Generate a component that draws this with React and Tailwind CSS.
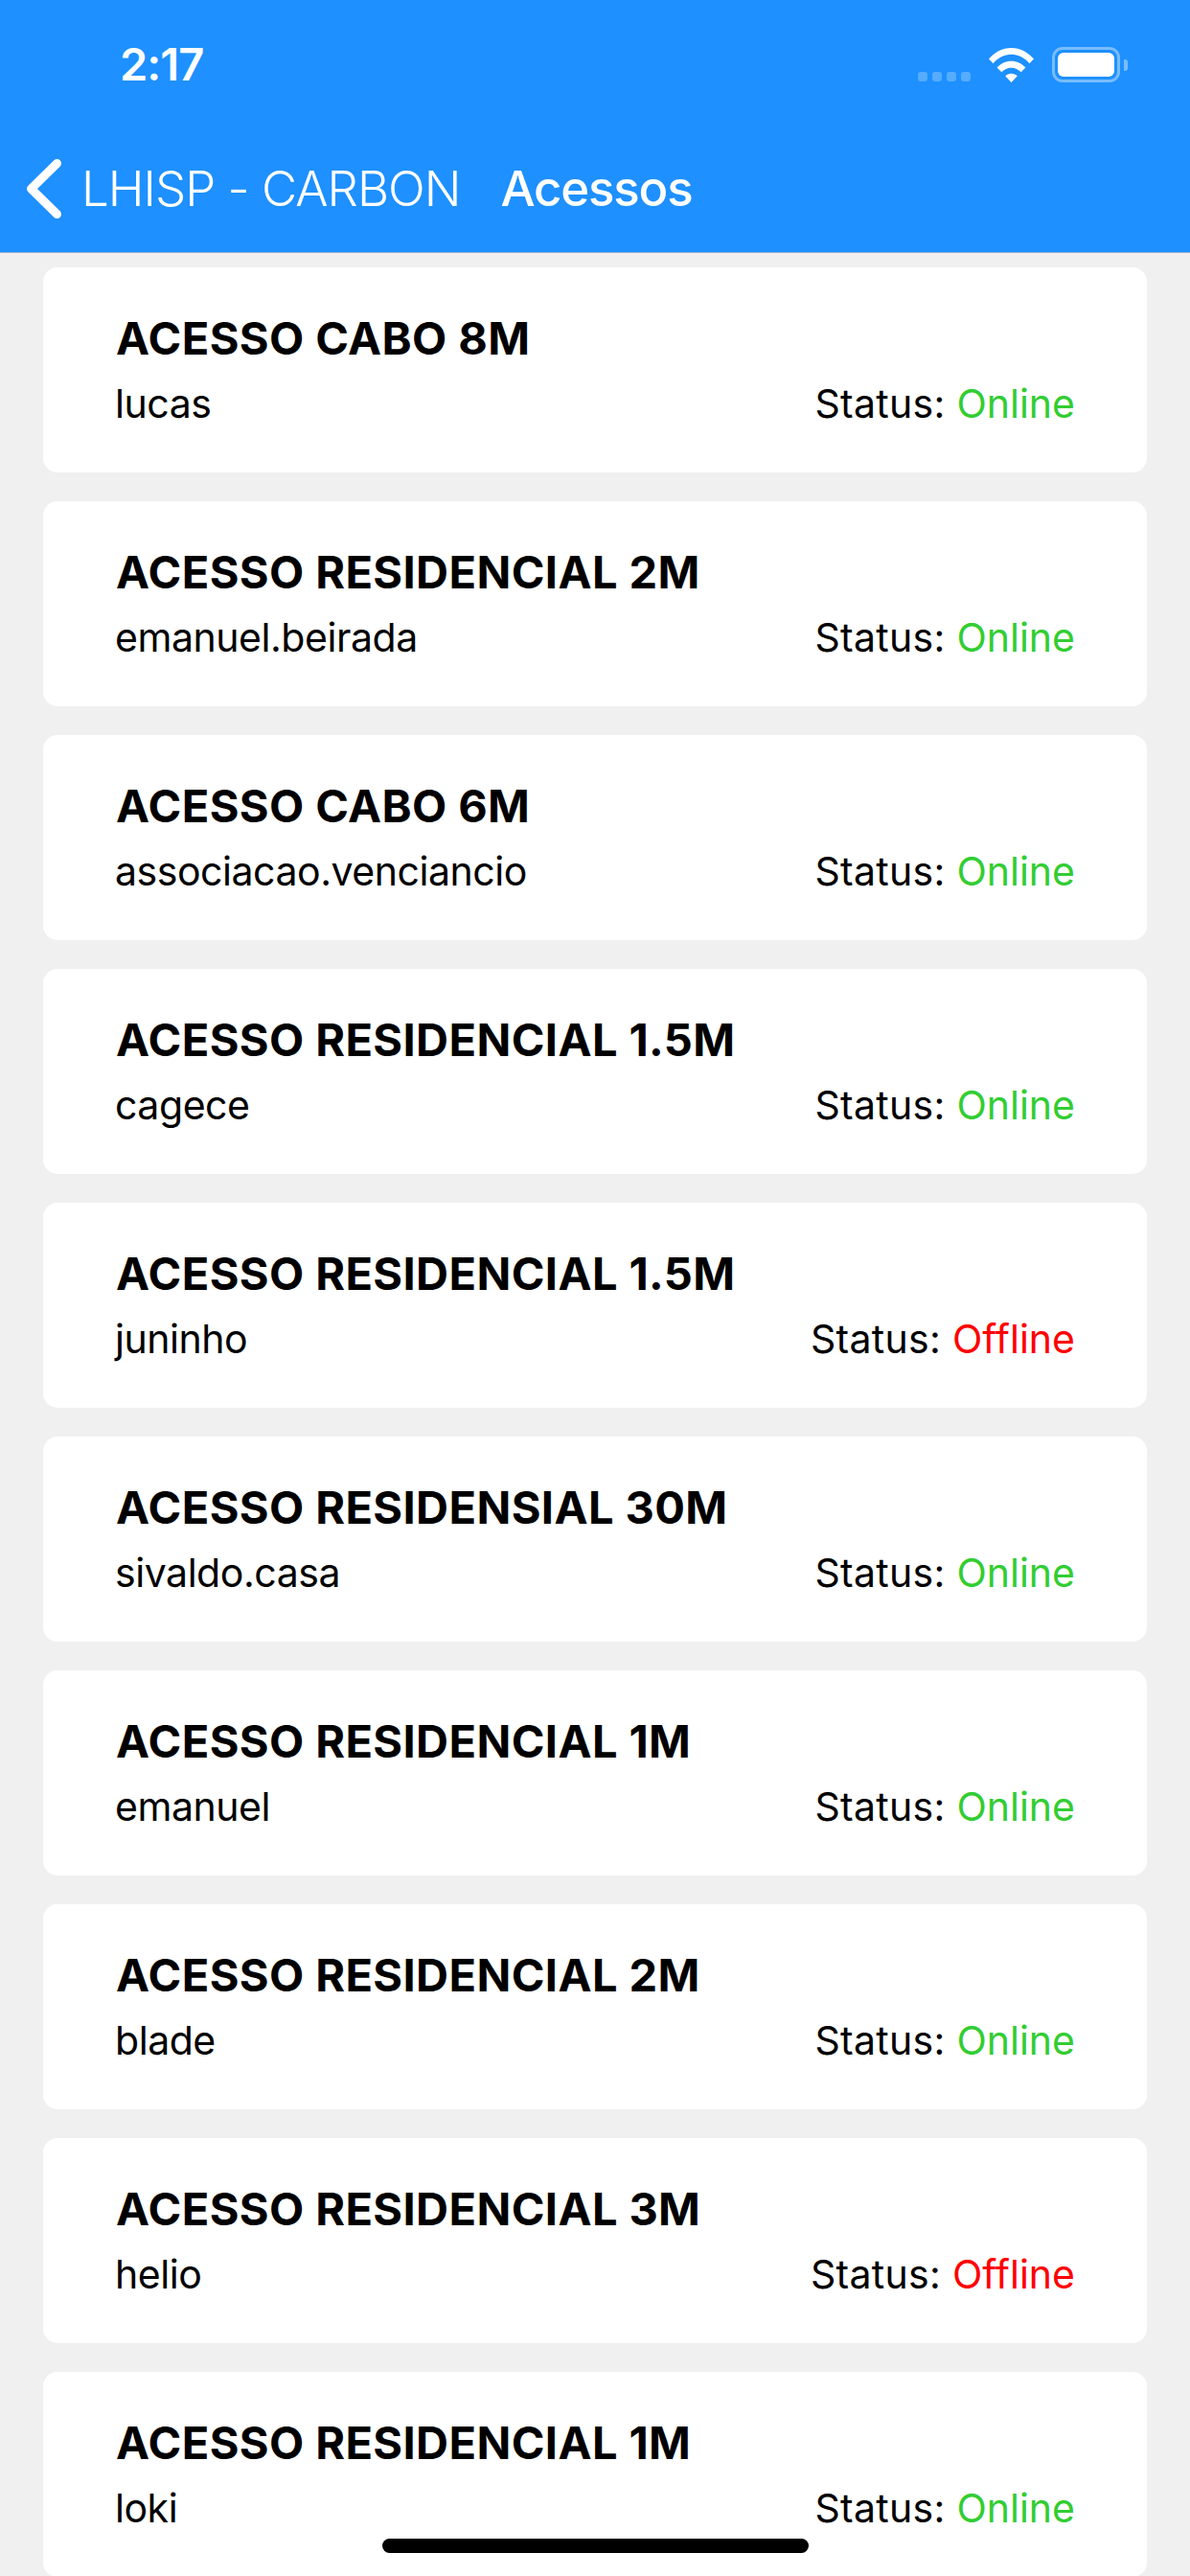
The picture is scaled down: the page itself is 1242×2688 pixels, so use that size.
const acessos = [
  { plano: 'ACESSO CABO 8M', login: 'lucas', online: true },
  { plano: 'ACESSO RESIDENCIAL 2M', login: 'emanuel.beirada', online: true },
  { plano: 'ACESSO CABO 6M', login: 'associacao.venciancio', online: true },
  { plano: 'ACESSO RESIDENCIAL 1.5M', login: 'cagece', online: true },
  { plano: 'ACESSO RESIDENCIAL 1.5M', login: 'juninho', online: false },
  { plano: 'ACESSO RESIDENSIAL 30M', login: 'sivaldo.casa', online: true },
  { plano: 'ACESSO RESIDENCIAL 1M', login: 'emanuel', online: true },
  { plano: 'ACESSO RESIDENCIAL 2M', login: 'blade', online: true },
  { plano: 'ACESSO RESIDENCIAL 3M', login: 'helio', online: false },
  { plano: 'ACESSO RESIDENCIAL 1M', login: 'loki', online: true },
];

function StatusBar() {
  return (
    <div className="flex h-[134px] items-start justify-between pl-[125px] pr-[65px] pt-[42px]">
      <span className="text-[47px] font-semibold leading-[50px] tracking-[-1px]">2:17</span>
      <div className="flex items-end pt-[7px]">
        <div className="mr-[19px] flex gap-[5px] pb-[1px]">
          {[0, 1, 2, 3].map((i) => (
            <div key={i} className="h-[10px] w-[10px] rounded-[3px] bg-white/25" />
          ))}
        </div>
        <svg className="mr-[19px] h-[36px] w-[47px]" viewBox="0 0 47 36" fill="white">
          <path d="M0 11.5C6.2 4.4 14.4 0 23.5 0S40.8 4.4 47 11.5l-4.6 4.7C37.5 10.4 30.9 6.8 23.5 6.8S9.500 10.4 4.600 16.2z" />
          <path d="M8.6 20.5c3.9-4.1 9.2-6.7 14.9-6.7s11 2.6 14.9 6.7l-4.7 4.8c-2.7-2.7-6.3-4.5-10.2-4.5s-7.5 1.8-10.2 4.5z" />
          <path d="M17.2 29.3c1.7-1.5 3.9-2.5 6.3-2.5s4.6 1 6.3 2.500L23.5 36z" />
        </svg>
        <div className="h-[37px] w-[71px] rounded-[11px] border-[3px] border-white/40 p-[3px]">
          <div className="h-full w-full rounded-[6px] bg-white" />
        </div>
        <div className="mb-[12px] ml-[4px] h-[12px] w-[4px] rounded-r-[3px] bg-white/40" />
      </div>
    </div>
  );
}

function NavBar() {
  return (
    <div className="flex h-[129px] items-start pl-[28px] pt-[32px]">
      <svg className="h-[62px] w-[36px]" viewBox="0 0 36 62" fill="none" stroke="white" strokeWidth="9" strokeLinecap="round" strokeLinejoin="round">
        <path d="M31.500 4.500 4.500 31 31.500 57.500" />
      </svg>
      <span className="ml-[21px] text-[51px] font-light leading-[62px] tracking-[-1px]">LHISP - CARBON</span>
      <span className="ml-[42px] text-[51px] font-medium leading-[62px] tracking-[-1.2px]">Acessos</span>
    </div>
  );
}

function AcessoCard({ plano, login, online }) {
  return (
    <div className="rounded-[15px] bg-white pb-[42px] pl-[76px] pr-[75px] pt-[45px]">
      <div className="text-[47px] font-bold leading-[58px] tracking-[0.4px] text-black">{plano}</div>
      <div className="mt-[9px] flex items-center justify-between text-[41px] leading-[60px] text-black">
        <span className="-ml-[1px] tracking-[-0.45px]">{login}</span>
        <span>
          <span className="tracking-[0.3px]">Status: </span>
          <span className={online ? 'text-[#32cd32]' : 'text-[#ff0000]'}>{online ? 'Online' : 'Offline'}</span>
        </span>
      </div>
    </div>
  );
}

export default function App() {
  return (
    <div className="relative h-[2688px] w-[1242px] overflow-hidden bg-[#f0f0f0] font-['Inter',sans-serif]">
      <header className="h-[264px] border-b border-[#8fb0d0] bg-[#1e90ff] text-white">
        <StatusBar />
        <NavBar />
      </header>
      <main className="flex flex-col gap-[30px] px-[45px] pt-[15px]">
        {acessos.map((a, i) => (
          <AcessoCard key={i} {...a} />
        ))}
      </main>
      <div className="absolute bottom-[24px] left-[399px] h-[15px] w-[445px] rounded-full bg-black" />
    </div>
  );
}
